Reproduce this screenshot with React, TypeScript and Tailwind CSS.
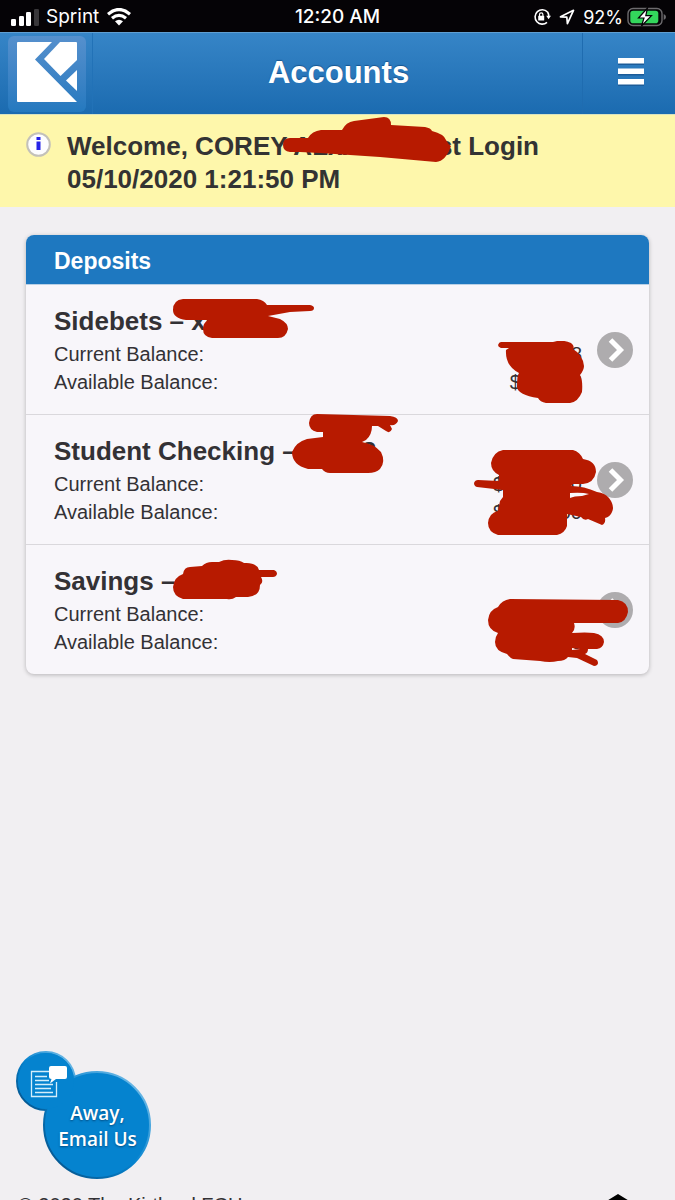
import React from 'react';

interface Mark {
  className: string;
  viewBox: string;
  d: string;
}

interface Account {
  name: string;
  number: string;
  current: string;
  available: string;
  marks: Mark[];
}

const ACCOUNTS: Account[] = [
  {
    name: 'Sidebets',
    number: 'x0000',
    current: '$000.08',
    available: '$000.08',
    marks: [
      {
        className: 'left-[146px] top-[14px] w-[142px] h-[40px]',
        viewBox: '172 299 142 40',
        d: 'M183 299H257Q264 300 267 305H310Q314 306 314 308Q314 311 310 311L290 312L268 316L280 319Q288 323 288 329Q286 338 278 338H212Q203 337 203 329Q203 323 208 320H186Q173 318 173 310Q173 300 183 299Z',
      },
      {
        className: 'right-[65px] top-[56px] w-[86px] h-[62px]',
        viewBox: '498 341 86 62',
        d: 'M501 342H553Q562 339 571 343Q575 346 573 349Q583 355 584 366Q584 370 580 375Q583 380 582 392Q578 402 570 403H546Q540 402 538 398Q518 395 517 387Q517 375 519 373Q505 366 506 350L509 348H501Q498 347 498 345Q499 342 501 342Z',
      },
    ],
  },
  {
    name: 'Student Checking',
    number: 'x0008',
    current: '$0,000.00',
    available: '$0,000.00',
    marks: [
      {
        className: 'left-[266px] -top-px w-[106px] h-[59px]',
        viewBox: '292 414 106 59',
        d: 'M317 414L390 416Q398 417 398 421Q396 426 390 425L392 429Q390 434 386 431L378 426H372Q372 435 366 440L362 442Q374 444 381 452Q386 462 380 469Q376 473 368 473H330Q325 473 322 469H308Q292 465 292 452Q296 442 307 439L323 437V432H317Q309 430 309 423Q310 414 317 414Z',
      },
      {
        className: 'right-[36px] top-[35px] w-[139px] h-[86px]',
        viewBox: '474 450 139 86',
        d: 'M503 450H573Q580 452 583 459Q596 461 596 472Q594 483 583 484H573L571 486Q584 486 597 492Q605 493 609 498Q615 506 612 512Q610 517 605 518Q606 523 602 525L588 519Q584 521 581 517L567 514V526Q565 533 557 535H498Q488 532 488 523Q489 513 498 511L500 501L503 497V490L477 487Q474 486 474 483Q475 480 478 480L499 481V475Q491 471 491 463Q493 452 503 450ZM570 493V498Q574 496 582 496L589 494Q582 492 570 493Z',
      },
    ],
  },
  {
    name: 'Savings',
    number: 'x0000',
    current: '$000.00',
    available: '$000.00',
    marks: [
      {
        className: 'left-[147px] top-[14px] w-[104px] h-[41px]',
        viewBox: '173 559 104 41',
        d: 'M183 574Q184 567 190 567L202 566Q206 562 212 562L219 562Q225 559 232 560Q240 560 244 563Q256 562 259 570H274Q277 571 277 574Q276 577 273 577H261Q264 582 260 585Q260 596 248 597H236Q232 600 227 599H183Q173 596 173 587Q174 577 183 574Z',
      },
      {
        className: 'right-[21px] top-[54px] w-[140px] h-[67px]',
        viewBox: '488 599 140 67',
        d: 'M510 599L618 600Q628 602 628 612Q626 622 618 623H574Q576 629 572 633Q586 632 594 633Q604 635 604 642Q603 648 597 649H588Q588 653 585 654L597 660Q600 665 594 666L577 658L568 657Q565 661 558 661Q550 663 540 661L513 659Q510 658 507 654Q495 651 495 642Q495 637 498 633Q488 630 488 620Q489 610 498 607Q502 600 510 599ZM572 648V650L580 649Z',
      },
    ],
  },
];

const Scribble: React.FC<Mark> = ({ className, viewBox, d }) => (
  <svg className={`absolute z-10 pointer-events-none ${className}`} viewBox={viewBox} fill="#b71a00" aria-hidden="true">
    <path fillRule="evenodd" d={d} />
  </svg>
);

const StatusBar: React.FC = () => (
  <div className="grid grid-cols-3 items-center h-8 px-[11px] pt-0.5 bg-[#050306] text-white font-['Inter',sans-serif] text-[19px] shrink-0">
    <div className="flex items-center">
      <svg className="w-7 h-[17px] mr-[7px]" viewBox="0 0 28 17" fill="#fff">
        <rect x="0" y="10" width="5" height="7" rx="1.3" />
        <rect x="8" y="7" width="5" height="10" rx="1.3" />
        <rect x="15" y="3" width="5" height="14" rx="1.3" />
        <rect x="23" y="0" width="5" height="17" rx="1.3" fill="#39373a" />
      </svg>
      <span>Sprint</span>
      <svg className="w-6 h-[18px] ml-2" viewBox="0 0 24 18" fill="none" stroke="#fff" strokeWidth="3.2">
        <path d="M1 6.2Q12-3.2 23 6.2" />
        <path d="M5 10.3Q12 4.5 19 10.3" />
        <path d="M8 13.2Q12 10.2 16 13.2L12 17.6Z" fill="#fff" stroke="none" />
      </svg>
    </div>
    <span className="text-center font-medium whitespace-nowrap">12:20 AM</span>
    <div className="flex items-center justify-end">
      <svg className="w-[18px] h-[18px] shrink-0" viewBox="0 0 18 18" fill="none" stroke="#fff" strokeWidth="1.6">
        <path d="M14.5 4A7.2 7.2 0 1 0 14 14.4M14.6 4Q15.8 6 15.8 8.5" />
        <path d="M13.2 7.8H18L15.6 11.2Z" fill="#fff" stroke="none" />
        <rect x="5.2" y="7.8" width="6" height="4.8" rx=".6" fill="#fff" stroke="none" />
        <path d="M6.5 8V6.6a1.7 1.7 0 0 1 3.4 0V8" strokeWidth="1.2" />
      </svg>
      <svg className="w-4 h-4 ml-2 shrink-0" viewBox="0 0 16 16" fill="none" stroke="#fff" strokeWidth="1.7" strokeLinejoin="round">
        <path d="M1.5 7.8L14.5 1.3L8.4 14.6L7.8 8.2Z" />
      </svg>
      <span className="ml-2 text-[18px]">92%</span>
      <svg className="w-[39px] h-5 ml-1 -mr-0.5 shrink-0" viewBox="0 0 39 20">
        <rect x="1" y="1.5" width="34" height="17" rx="5" fill="none" stroke="#6d6b6e" strokeWidth="1.4" />
        <path d="M36.7 7Q39 8 39 10T36.7 13Z" fill="#6d6b6e" />
        <rect x="3.3" y="3.8" width="28" height="12.4" rx="2.8" fill="#33d65c" />
        <path d="M20.5 1L11.5 11H17L14.5 19L24.5 8.6H18.8Z" fill="#fff" stroke="#050306" strokeWidth="1.2" />
      </svg>
    </div>
  </div>
);

const Header: React.FC = () => (
  <header className="flex items-stretch h-[82px] shrink-0 bg-linear-to-b from-[#3685c7] to-[#1b6bb0] border-t border-[#5f9fd2]">
    <a href="#" aria-label="Home" className="flex items-center w-[93px] pl-2 border-r border-[#2272b7]">
      <span className="flex items-center justify-center w-[78px] h-[76px] pb-1 rounded-md bg-linear-to-b from-[#5590cd] to-[#2479bf]">
        <svg className="w-[60px] h-[60px]" viewBox="0 0 60 60" fill="#fff">
          <path d="M0 1Q0 0 1 0H35L18 17.5L60 60H1Q0 60 0 59Z" />
          <path d="M43 0H59Q60 0 60 1V18L43.5 34L27 17Z" />
          <path d="M60 28V49L49 38.5Z" />
        </svg>
      </span>
    </a>
    <h1 className="flex-1 self-center pl-0.5 pb-0.5 text-center text-[31px] leading-10 font-bold text-white [text-shadow:0_-1px_1px_rgba(0,50,100,0.5)]">Accounts</h1>
    <button type="button" aria-label="Menu" className="flex items-center justify-center w-[93px] pl-1 pb-1 border-l border-[#1f6cb0]">
      <svg className="w-[26px] h-[28px]" viewBox="0 0 26 28" fill="#fff">
        <path fill="#1c5c99" d="M0 5H26V7H0ZM0 15.5H26V17.5H0ZM0 26H26V28H0Z" />
        <path d="M0 0H26V5.5H0ZM0 10.5H26V16H0ZM0 21H26V26.5H0Z" />
      </svg>
    </button>
  </header>
);

const Welcome: React.FC = () => (
  <div className="relative flex shrink-0 px-[26px] pt-[15px] pb-[11px] bg-[#fef7ab] border-t border-[#d8e3c0]">
    <svg className="w-[25px] h-[25px] mt-0.5 mr-4 shrink-0" viewBox="0 0 25 25">
      <circle cx="12.5" cy="12.5" r="11.3" fill="#fdfdff" stroke="#c3c1ba" strokeWidth="2" />
      <path fill="#2522e8" d="M10.5 5H14.5V8H10.5ZM10.5 9.5H14.5V18H10.5Z" />
    </svg>
    <p className="text-[26px] leading-[33px] font-bold text-[#333]">
      Welcome, COREY ALxxxxx Last Login
      <br />
      05/10/2020 1:21:50 PM
    </p>
    <Scribble
      className="left-[283px] top-[2px] w-[168px] h-[45px]"
      viewBox="283 117 168 45"
      d="M290 138H308Q312 131 321 130L342 130Q346 122 354 121L384 117Q391 117 391 125L425 127Q431 128 432 131Q444 134 446 140Q448 144 451 146Q446 161 436 162L380 157L320 153L300 152H290Q283 151 283 145Q283 138 290 138Z"
    />
  </div>
);

const AccountRow: React.FC<{ account: Account }> = ({ account }) => (
  <li className="relative border-b border-[#dad8dc] last:border-b-0">
    <a href="#" className="flex items-center pl-7 pr-4 pt-5 pb-[18px]">
      <div className="flex-1">
        <h3 className="mb-[3px] text-[26px] leading-8 font-bold">
          {account.name} – {account.number}
        </h3>
        <dl className="text-[20px] leading-7">
          <div className="flex justify-between">
            <dt>Current Balance:</dt>
            <dd>{account.current}</dd>
          </div>
          <div className="flex justify-between">
            <dt>Available Balance:</dt>
            <dd>{account.available}</dd>
          </div>
        </dl>
      </div>
      <svg className="w-9 h-9 ml-[15px] mb-0.5 shrink-0" viewBox="0 0 36 36" fill="none">
        <circle cx="18" cy="18" r="18" fill="#aeacae" />
        <path d="M13.5 8L23.5 18L13.5 28" stroke="#fff" strokeWidth="5" />
      </svg>
    </a>
    {account.marks.map((mark) => (
      <Scribble key={mark.viewBox} {...mark} />
    ))}
  </li>
);

export default function App() {
  return (
    <div className="flex flex-col h-screen overflow-hidden bg-[#f1eff2] text-[#333135] font-['Liberation_Sans',Arial,sans-serif]">
      <StatusBar />
      <Header />
      <Welcome />

      <main className="px-[26px] pt-7 shrink-0">
        <section className="rounded-lg bg-[#f8f6fa] shadow-[0_1px_4px_rgba(0,0,0,0.25)]">
          <h2 className="h-[50px] pt-[9px] pl-7 rounded-t-lg bg-[#1e78c0] border-b border-[#b9d0e6] text-[23px] leading-[34px] font-bold text-white">
            Deposits
          </h2>
          <ul>
            {ACCOUNTS.map((account) => (
              <AccountRow key={account.name} account={account} />
            ))}
          </ul>
        </section>
      </main>

      {/* Chat bubble */}
      <button type="button" className="relative w-[136px] h-32 ml-4 mt-[377px] shrink-0 text-white">
        <svg className="w-full h-full" viewBox="0 0 136 128">
          <defs>
            <linearGradient id="edge" x1="0" y1="1" x2="1" y2="0">
              <stop offset="0" stopColor="#064c80" />
              <stop offset="0.5" stopColor="#0583cf" />
              <stop offset="1" stopColor="#8cc8ec" />
            </linearGradient>
          </defs>
          <g fill="#0583cf" stroke="url(#edge)" strokeWidth="2">
            <circle cx="30" cy="30" r="29" />
            <circle cx="81" cy="74" r="53" />
          </g>
          <circle cx="30" cy="30" r="28" fill="#0583cf" />
          <g fill="none" stroke="#d5eefa" strokeWidth="1.3">
            <path d="M33 20.5H15.5V45.5H40.5V31" />
            <path d="M19 25.5H31M19 29.5H33M19 33.5H37M19 37.5H35M19 41.5H37" />
          </g>
          <path d="M35 15H49Q51 15 51 17V26Q51 28 49 28H40L34 32.5L35.5 28Q33 28 33 26V17Q33 15 35 15Z" fill="#fff" />
        </svg>
        <span className="absolute left-[27px] top-[49px] w-[109px] text-center font-['Open_Sans',sans-serif] text-[19px] leading-[26px] font-semibold [text-shadow:0_1px_2px_rgba(0,40,80,0.6)]">
          Away,
          <br />
          Email Us
        </span>
      </button>

      <footer className="flex justify-between items-start pl-[18px] pr-[44px] mt-3 shrink-0 text-[20px] leading-7">
        <p>© 2020 The Kirtland FCU</p>
        <svg className="w-[26px] h-[26px] mt-[3px]" viewBox="0 0 26 26" fill="#000">
          <path fillRule="evenodd" d="M13 0L26 8V13H23V26H3V13H0V8ZM8 11V14H18V11ZM8 17V20H18V17Z" />
        </svg>
      </footer>
    </div>
  );
}
